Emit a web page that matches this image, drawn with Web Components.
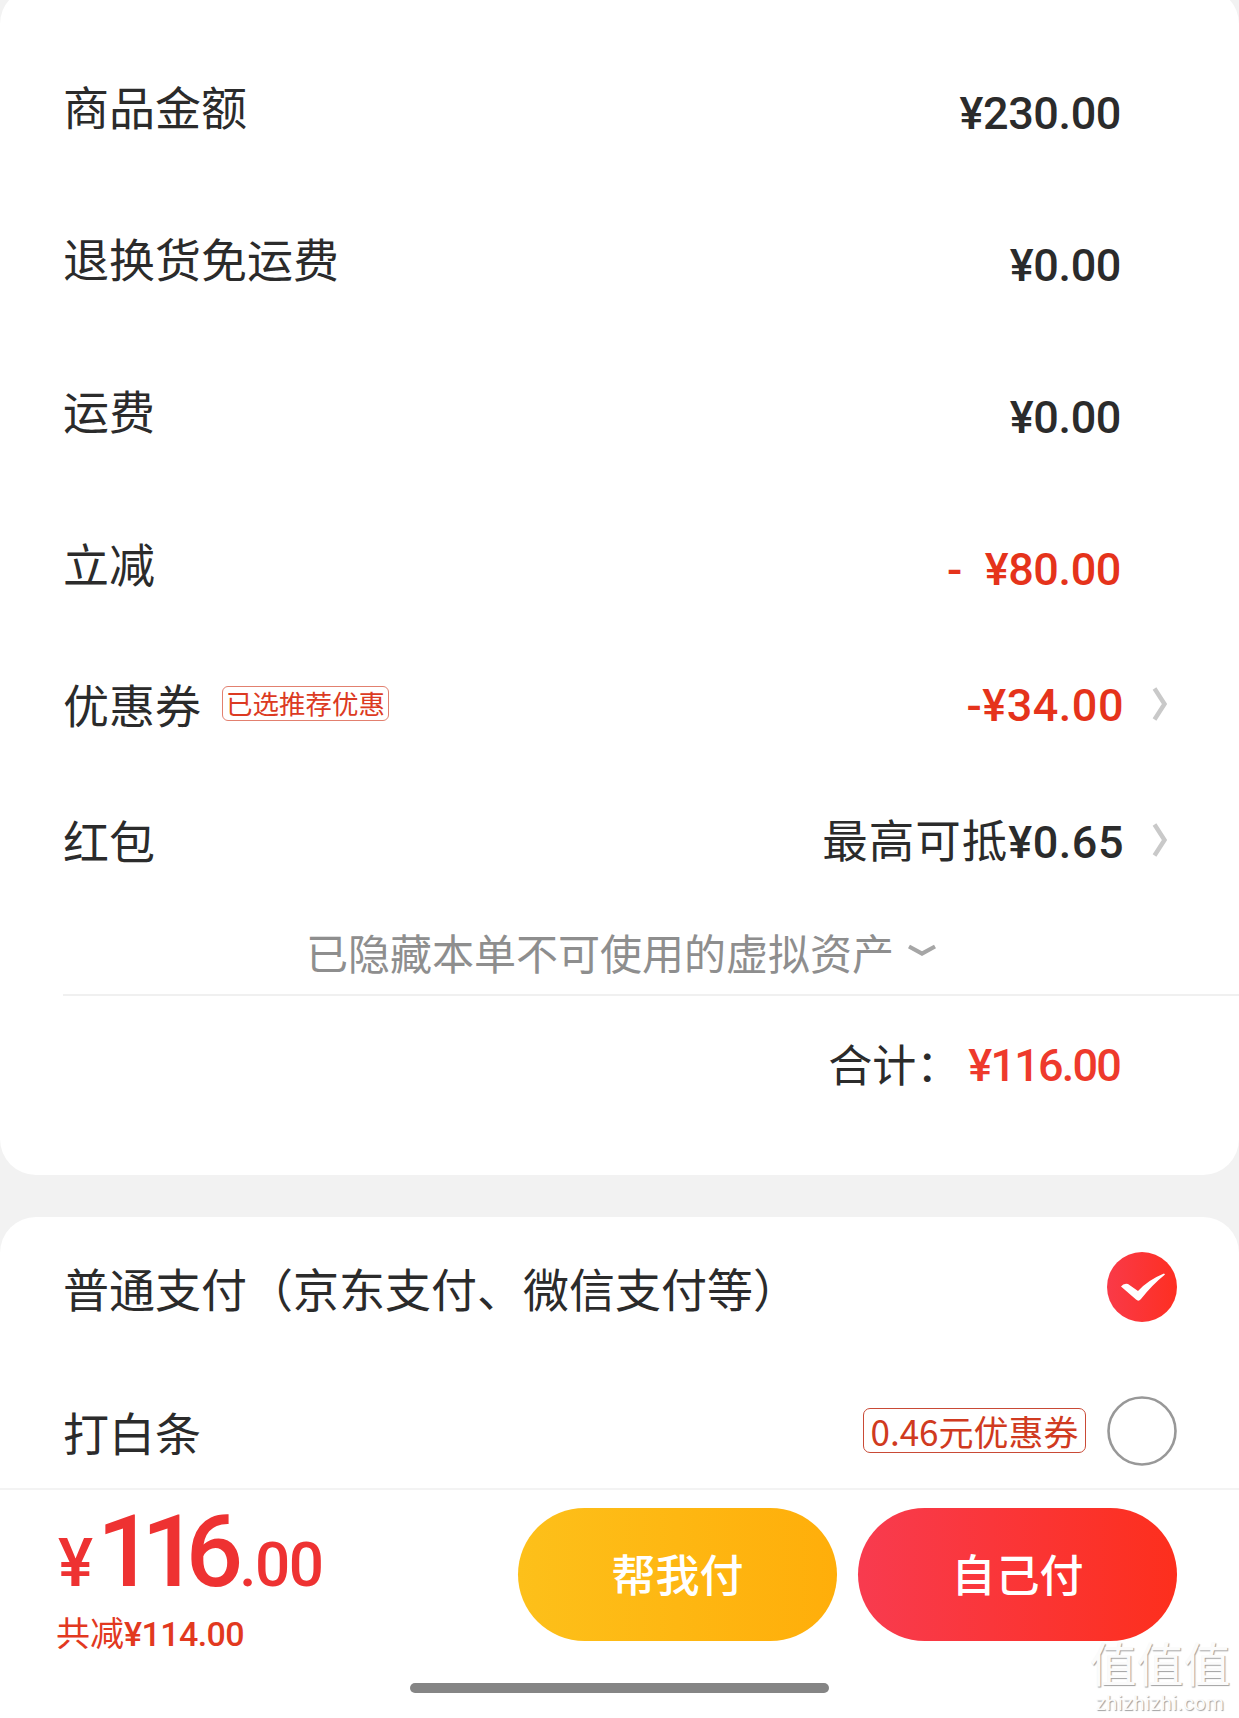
<!doctype html>
<html lang="zh-CN">
<head>
<meta charset="utf-8">
<title>订单结算</title>
<style>
  html, body { margin: 0; height: 100%; overflow: hidden; }
  body {
    background: #f2f2f2;
    color: #2b2b2b;
    font-family: "Noto Sans CJK SC", "Noto Sans", sans-serif;
  }
  checkout-page { height: 1718px; }
</style>
</head>
<body>
<checkout-page>
  <price-card>
    <fee-row h="152"><span>商品金额</span><fee-value slot="value">¥230.00</fee-value></fee-row>
    <fee-row h="152"><span>退换货免运费</span><fee-value slot="value">¥0.00</fee-value></fee-row>
    <fee-row h="152"><span>运费</span><fee-value slot="value">¥0.00</fee-value></fee-row>
    <fee-row h="153"><span>立减</span><fee-value slot="value" tone="red" wide>- ¥80.00</fee-value></fee-row>
    <fee-row h="130" link>
      <span>优惠券</span><promo-tag slot="label-extra">已选推荐优惠</promo-tag>
      <fee-value slot="value" tone="red" flat>-¥34.00</fee-value>
    </fee-row>
    <fee-row h="142" link>
      <span>红包</span>
      <fee-value slot="value" flat lift><cjk-text>最高可抵</cjk-text>¥0.65</fee-value>
    </fee-row>
    <hidden-note>已隐藏本单不可使用的虚拟资产</hidden-note>
    <total-row>¥116.00</total-row>
  </price-card>
  <pay-card>
    <pay-option h="144" checked>普通支付（京东支付、微信支付等）</pay-option>
    <pay-option h="127" pad="16">打白条<promo-tag slot="extra" size="large">0.46元优惠券</promo-tag></pay-option>
  </pay-card>
  <pay-bar>
    <pay-button slot="actions" kind="friend">帮我付</pay-button>
    <pay-button slot="actions" kind="self">自己付</pay-button>
  </pay-bar>
</checkout-page>

<script>
const CJK = '"Noto Sans CJK SC", "Noto Sans", sans-serif';
const NUM = 'Roboto, "Noto Sans CJK SC", sans-serif';

class CheckoutPage extends HTMLElement {
  constructor() {
    super();
    this.attachShadow({ mode: "open" }).innerHTML = `
      <style>
        :host { display: flex; flex-direction: column; position: relative; overflow: hidden; }
        .mark {
          position: absolute; right: 8px; bottom: 3px; width: 142px;
          display: flex; flex-direction: column; align-items: center;
          color: #fbfbfb; text-shadow: 1px 1px 1px #a0a0a0;
          font-family: ${CJK}; pointer-events: none;
        }
        .logo { font-size: 47px; line-height: 42px; margin-bottom: 8px; white-space: nowrap; }
        .site { font-family: ${NUM}; font-size: 20px; line-height: 24px; letter-spacing: .5px; }
      </style>
      <slot></slot>
      <div class="mark"><span class="logo">值值值</span><span class="site">zhizhizhi.com</span></div>`;
  }
}

class PriceCard extends HTMLElement {
  constructor() {
    super();
    this.attachShadow({ mode: "open" }).innerHTML = `
      <style>
        :host {
          display: block; background: #fff; border-radius: 36px;
          margin-top: -12px; padding: 44px 0 0 0; height: 1187px; box-sizing: border-box;
          flex: none;
        }
      </style>
      <slot></slot>`;
  }
}

class FeeRow extends HTMLElement {
  constructor() {
    super();
    const h = this.getAttribute("h") || 152;
    const link = this.hasAttribute("link");
    this.attachShadow({ mode: "open" }).innerHTML = `
      <style>
        :host {
          display: flex; align-items: center; height: ${h}px;
          padding: 0 ${link ? 72 : 118}px 0 63px;
          font-size: 46px; color: #2b2b2b; font-family: ${CJK};
        }
        .label { display: flex; align-items: center; gap: 21px; padding-bottom: 6px; }
        .value { margin-left: auto; display: flex; align-items: center; gap: 28px; }
        svg { width: 15px; height: 34px; flex: none; margin-top: -4px; }
      </style>
      <div class="label"><slot></slot><slot name="label-extra"></slot></div>
      <div class="value">
        <slot name="value"></slot>
        ${link ? `<svg viewBox="0 0 15 34"><path d="M2.5 1.5 12.5 17 2.5 32.5" fill="none" stroke="#c9c9c9" stroke-width="4.4"/></svg>` : ""}
      </div>`;
  }
}

class FeeValue extends HTMLElement {
  constructor() {
    super();
    const red = this.getAttribute("tone") === "red";
    const flat = this.hasAttribute("flat");
    this.attachShadow({ mode: "open" }).innerHTML = `
      <style>
        :host {
          display: block; font-family: ${NUM}; font-weight: 500; font-size: 45px;
          line-height: 52px; color: ${red ? "#e5331b" : "#2b2b2b"};
          padding-top: ${flat ? 0 : 11}px; padding-bottom: ${this.hasAttribute("lift") ? 4 : 0}px;
          white-space: nowrap; letter-spacing: ${flat ? ".5px" : "-.4px"};
          word-spacing: ${this.hasAttribute("wide") ? 12 : 0}px;
        }
      </style>
      <slot></slot>`;
  }
}

class CjkText extends HTMLElement {
  constructor() {
    super();
    this.attachShadow({ mode: "open" }).innerHTML = `
      <style>:host { font-family: ${CJK}; font-weight: 400; font-size: 45.5px; letter-spacing: 1px; }</style><slot></slot>`;
  }
}

class PromoTag extends HTMLElement {
  constructor() {
    super();
    const large = this.getAttribute("size") === "large";
    this.attachShadow({ mode: "open" }).innerHTML = `
      <style>
        :host {
          display: flex; align-items: center; justify-content: center; box-sizing: border-box;
          width: ${large ? 223 : 167}px; height: ${large ? 45 : 35}px;
          border: 1px solid ${large ? "#c94a36" : "#e2806f"};
          border-radius: ${large ? 7 : 6}px;
          color: ${large ? "#d03a20" : "#dc3a22"};
          font-size: ${large ? 35 : 26.5}px; line-height: 1; font-family: ${CJK};
          white-space: nowrap;
        }
      </style>
      <slot></slot>`;
  }
}

class HiddenNote extends HTMLElement {
  constructor() {
    super();
    this.attachShadow({ mode: "open" }).innerHTML = `
      <style>
        :host {
          display: flex; align-items: center; height: 83px; box-sizing: border-box;
          margin-left: 63px; padding-left: 243px; padding-bottom: 4px;
          border-bottom: 2px solid #f0f0f0;
          font-size: 42px; color: #8e8e8e; font-family: ${CJK}; white-space: nowrap;
        }
        svg { width: 30px; height: 14px; margin-left: 13px; margin-top: -3px; flex: none; }
      </style>
      <slot></slot>
      <svg viewBox="0 0 30 14"><path d="M2 3.5 15 10.5 28 3.5" fill="none" stroke="#a6a6a6" stroke-width="4.2"/></svg>`;
  }
}

class TotalRow extends HTMLElement {
  constructor() {
    super();
    this.attachShadow({ mode: "open" }).innerHTML = `
      <style>
        :host {
          display: flex; align-items: center; justify-content: flex-end;
          height: 138px; padding-right: 119px; box-sizing: border-box;
          font-size: 44px; color: #2b2b2b; font-family: ${CJK};
        }
        .label { width: 140px; padding-bottom: 5px; }
        .sum { font-family: ${NUM}; font-weight: 500; font-size: 45px; color: #ee3a2c; letter-spacing: -1.8px; }
      </style>
      <span class="label">合计：</span><span class="sum"><slot></slot></span>`;
  }
}

class PayCard extends HTMLElement {
  constructor() {
    super();
    this.attachShadow({ mode: "open" }).innerHTML = `
      <style>
        :host {
          display: block; flex: none; background: #fff; margin-top: 42px;
          border-radius: 36px 36px 0 0; height: 271px;
        }
      </style>
      <slot></slot>`;
  }
}

class PayOption extends HTMLElement {
  constructor() {
    super();
    const h = this.getAttribute("h");
    const pad = this.getAttribute("pad") || 0;
    const checked = this.hasAttribute("checked");
    const mark = checked
      ? `<svg viewBox="0 0 70 70"><defs><linearGradient id="c" x1="0" x2="1"><stop offset="0" stop-color="#f93a48"/><stop offset="1" stop-color="#fe2f22"/></linearGradient></defs>
           <circle cx="35" cy="35" r="35" fill="url(#c)"/>
           <path d="M14 34.5Q16.500 31 21 32L31 39Q41 28 57 21.500L58 22.500Q45 33 34 47Q31.500 50 29 47.500Z" fill="#fff"/></svg>`
      : `<svg viewBox="0 0 70 70"><circle cx="35" cy="35" r="33.500" fill="#fff" stroke="#989898" stroke-width="2.600"/></svg>`;
    this.attachShadow({ mode: "open" }).innerHTML = `
      <style>
        :host {
          display: flex; align-items: center; box-sizing: border-box; height: ${h}px;
          padding: ${pad}px 62px 4px 63px; font-size: 46px; color: #2b2b2b;
          font-family: ${CJK}; white-space: nowrap;
        }
        .end { margin-left: auto; display: flex; align-items: center; gap: 21px; }
        svg { width: 70px; height: 70px; display: block; flex: none; }
      </style>
      <slot></slot>
      <div class="end"><slot name="extra"></slot>${mark}</div>`;
  }
}

class PayBar extends HTMLElement {
  constructor() {
    super();
    this.attachShadow({ mode: "open" }).innerHTML = `
      <style>
        :host {
          display: flex; flex-direction: column; flex: 1; background: #fff;
          border-top: 2px solid #f3f3f3; box-sizing: border-box;
        }
        .main { display: flex; height: 153px; padding: 18px 62px 0 58px; box-sizing: content-box; }
        .price { flex: 1; color: #ee3232; font-family: ${NUM}; font-weight: 500; white-space: nowrap; }
        .big { display: flex; align-items: baseline; height: 92px; line-height: 92px; margin-top: -2px; }
        .yen { font-size: 66px; margin-right: 4px; }
        .int { font-size: 101px; letter-spacing: -13px; margin-right: 9px; }
        .dec { font-size: 62px; letter-spacing: -1.5px; }
        .save { font-size: 34px; line-height: 42px; color: #e2391f; font-weight: 500; margin-top: 13px; margin-left: -2px; letter-spacing: -.6px; }
        .save i { font-style: normal; font-family: ${CJK}; font-weight: 400; letter-spacing: 0; }
        .actions { display: flex; gap: 21px; height: 133px; }
        .home { height: 10px; width: 419px; border-radius: 5px; background: #858585; margin: 22px auto 0 410px; }
      </style>
      <div class="main">
        <div class="price">
          <div class="big"><span class="yen">¥</span><span class="int">116</span><span class="dec">.00</span></div>
          <div class="save"><i>共减</i>¥114.00</div>
        </div>
        <div class="actions"><slot name="actions"></slot></div>
      </div>
      <div class="home"></div>`;
  }
}

class PayButton extends HTMLElement {
  constructor() {
    super();
    const self = this.getAttribute("kind") === "self";
    this.attachShadow({ mode: "open" }).innerHTML = `
      <style>
        :host {
          display: flex; align-items: center; justify-content: center;
          box-sizing: border-box; padding-bottom: 4px;
          width: 319px; height: 133px; border-radius: 67px; color: #fff;
          font-size: 44px; font-weight: 500; font-family: ${CJK};
          background: linear-gradient(90deg, ${self ? "#f83b4f, #fd2f1d" : "#fdc01a, #ffae0a"});
        }
      </style>
      <slot></slot>`;
  }
}

customElements.define("checkout-page", CheckoutPage);
customElements.define("price-card", PriceCard);
customElements.define("fee-row", FeeRow);
customElements.define("fee-value", FeeValue);
customElements.define("cjk-text", CjkText);
customElements.define("promo-tag", PromoTag);
customElements.define("hidden-note", HiddenNote);
customElements.define("total-row", TotalRow);
customElements.define("pay-card", PayCard);
customElements.define("pay-option", PayOption);
customElements.define("pay-bar", PayBar);
customElements.define("pay-button", PayButton);
</script>
</body>
</html>
